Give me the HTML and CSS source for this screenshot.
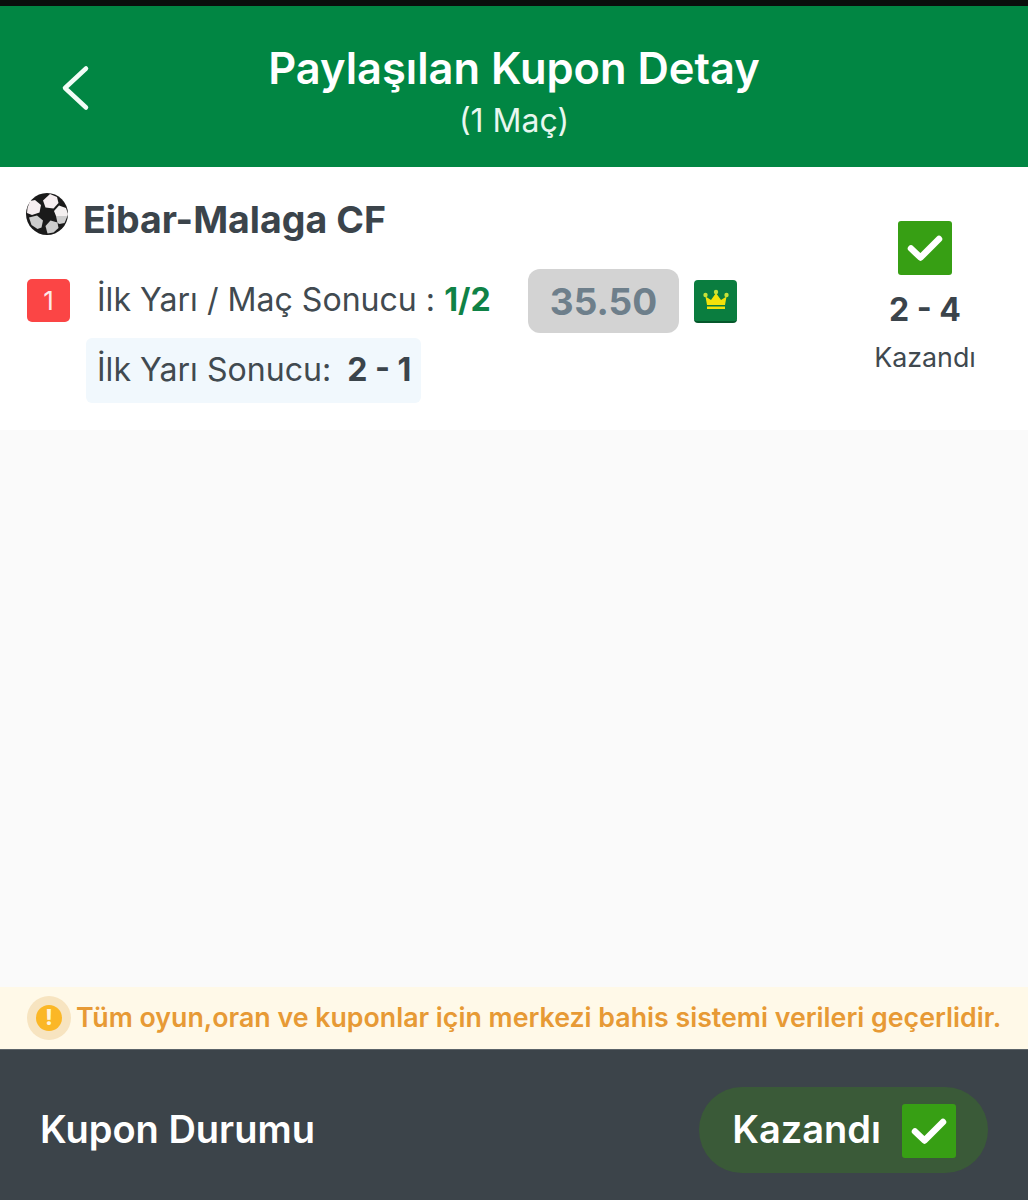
FILE: index.html
```html
<!DOCTYPE html>
<html lang="tr">
<head>
	<meta charset="utf-8">
	<title>Paylaşılan Kupon Detay</title>
	<link rel="stylesheet" href="styles.css">
</head>
<body>
<div class="statusBar"></div>
<header class="topBar">
	<div class="backBtn">
		<svg width="30" height="46" viewBox="0 0 30 46"><path d="M26 3.500 5 23l21 19.500" fill="none" stroke="#f2fdf7" stroke-width="4.500" stroke-linecap="round" stroke-linejoin="round"/></svg>
	</div>
	<div class="titleBox">
		<h1>Paylaşılan Kupon Detay</h1>
		<p>(1 Maç)</p>
	</div>
</header>
<main class="content">
	<section class="matchCard">
		<div class="matchInfo">
			<div class="matchName">
				<svg class="ball" width="44" height="42" viewBox="0 0 44 42">
					<circle cx="21" cy="21" r="21" fill="#1a1a1a"/>
					<path d="M24 1l7 3 1.500 6-5 5.500-8-1-2.500-7z" fill="#f6eef0"/>
					<path d="M1.500 15 4 8l5-1 6 5-1.500 7.500-7.500 2.500L1 20z" fill="#f6eef0"/>
					<path d="M33 12.500l7 2.500 2 6-.5 2H30l-2-5z" fill="#f4f0f0"/>
					<path d="M30 23h11.500l-3 7-5 1-2-1z" fill="#cdcdcd"/>
					<path d="M3 24.500 11 22.500l6 5-1.500 7-4 1.500-6-4z" fill="#cdcdcd"/>
					<path d="M19.500 33l5-5.500 7 2 1 5.500-5 4.500-6 1z" fill="#cdcdcd"/>
				</svg>
				<h2>Eibar-Malaga CF</h2>
			</div>
			<div class="betRow">
				<span class="betNo">1</span>
				<span class="betText">İlk Yarı / Maç Sonucu : <b>1/2</b></span>
				<span class="odds">35.50</span>
				<span class="crown">
					<svg width="28" height="24" viewBox="0 0 28 24">
						<path d="M5 17 3.500 8.500 9 12l5-7 5 7 5.500-3.500L23 17z" fill="#f3e20a"/>
						<rect x="5" y="18.500" width="18" height="2.500" fill="#f3e20a"/>
						<circle cx="3.500" cy="7" r="2.200" fill="#c6e23a"/>
						<circle cx="14" cy="4" r="2.200" fill="#c6e23a"/>
						<circle cx="24.500" cy="7" r="2.200" fill="#c6e23a"/>
					</svg>
				</span>
			</div>
			<div class="halfResult">İlk Yarı Sonucu: <b>2 - 1</b></div>
		</div>
		<div class="matchResult">
			<span class="checkBox">
				<svg width="36" height="28" viewBox="0 0 36 28"><path d="M4 14.500 13.500 23.500 32 5" fill="none" stroke="#fff" stroke-width="6.500" stroke-linecap="round" stroke-linejoin="round"/></svg>
			</span>
			<strong>2 - 4</strong>
			<span class="resultText">Kazandı</span>
		</div>
	</section>
</main>
<div class="notice">
	<span class="noticeIcon"><i>!</i></span>
	<span class="noticeText">Tüm oyun,oran ve kuponlar için merkezi bahis sistemi verileri geçerlidir.</span>
</div>
<footer class="bottomBar">
	<span class="statusLabel">Kupon Durumu</span>
	<div class="statusPill">
		<span>Kazandı</span>
		<span class="checkBox">
			<svg width="36" height="28" viewBox="0 0 36 28"><path d="M4 14.500 13.500 23.500 32 5" fill="none" stroke="#fff" stroke-width="6.500" stroke-linecap="round" stroke-linejoin="round"/></svg>
		</span>
	</div>
</footer>
</body>
</html>
```

FILE: styles.css
```css
html,body{margin:0;padding:0;height:1200px;overflow:hidden;}
body{display:flex;flex-direction:column;background:#fafafa;color:#3b444b;font-family:Inter,"Noto Sans",sans-serif;}
h1,h2,p{margin:0;}

.statusBar{height:6px;background:#0a0f0c;}

.topBar{height:161px;background:#018643;color:#fff;display:grid;grid-template-columns:1fr auto 1fr;box-sizing:border-box;padding-top:37px;}
.backBtn{padding:22px 0 0 60px;}
.titleBox{text-align:center;}
.titleBox h1{font-size:43.400px;line-height:50px;font-weight:600;}
.titleBox p{font-size:32px;line-height:38px;margin-top:9px;color:#e8f7ef;}

.content{flex:1;}
.matchCard{height:263px;background:#fff;display:flex;justify-content:space-between;box-sizing:border-box;padding:26px 52px 0 26px;}
.matchName{display:flex;align-items:flex-start;gap:13px;height:60px;}
.matchName h2{font-size:37.500px;line-height:54px;font-weight:700;}
.ball{flex:none;}

.betRow{display:flex;align-items:center;height:64px;margin:16px 0 0 1px;font-size:32.100px;}
.betNo{width:43px;height:43px;margin-bottom:2px;background:#fb4545;color:#fde9e9;border-radius:5px;font-size:26px;display:flex;align-items:center;justify-content:center;}
.betText{margin:0 0 3px 27px;width:431px;color:#414a50;white-space:nowrap;}
.betText b{color:#0f8246;font-weight:700;}
.odds{width:151px;height:64px;background:#d3d3d3;color:#6e7f8b;border-radius:12px;font-size:37px;font-weight:700;display:flex;align-items:center;justify-content:center;}
.crown{width:43px;height:43px;margin-left:15px;background:#0a7d3f;border-bottom:2px solid #05582b;box-sizing:border-box;border-radius:4px;display:flex;align-items:center;justify-content:center;}

.halfResult{display:inline-block;margin:5px 0 0 60px;padding:0 10px 0 11px;height:65px;line-height:63px;background:#f1f8fd;border-radius:6px;font-size:32.100px;color:#414a50;white-space:nowrap;}
.halfResult b{margin-left:7px;font-weight:700;color:#3b444b;}

.matchResult{display:flex;flex-direction:column;align-items:center;width:102px;padding-top:28px;}
.matchResult strong{font-size:32px;line-height:40px;margin-top:15px;white-space:nowrap;}
.resultText{font-size:26.800px;line-height:32px;margin-top:11px;color:#40494f;}
.checkBox{width:54px;height:54px;background:#379f14;border-radius:3px;display:flex;align-items:center;justify-content:center;flex:none;}

.notice{height:62px;background:#fff9e8;display:flex;align-items:center;padding-left:27px;gap:5px;box-sizing:border-box;}
.noticeIcon{width:44px;height:44px;border-radius:50%;background:#f7e4c0;display:flex;align-items:center;justify-content:center;flex:none;}
.noticeIcon i{width:26px;height:26px;border-radius:50%;background:#fbb726;color:#fff5dc;font-style:normal;font-weight:800;font-size:21px;line-height:26px;text-align:center;}
.noticeText{font-size:26.750px;font-weight:600;color:#e79a35;white-space:nowrap;margin-bottom:3px;}

.bottomBar{height:151px;box-sizing:border-box;border-top:1px solid #5c6469;background:#3c444a;color:#fff;display:flex;align-items:center;justify-content:space-between;padding:10px 40px 0;}
.statusLabel{font-size:38px;font-weight:600;margin-bottom:2px;}
.statusPill{height:86px;width:289px;box-sizing:border-box;background:#3a5a38;border-radius:43px;display:flex;align-items:center;justify-content:flex-end;gap:21px;padding-right:32px;font-size:38px;font-weight:600;}
.statusPill .checkBox{margin-top:2px;}
.statusPill span:first-child{margin-bottom:2px;}
```
